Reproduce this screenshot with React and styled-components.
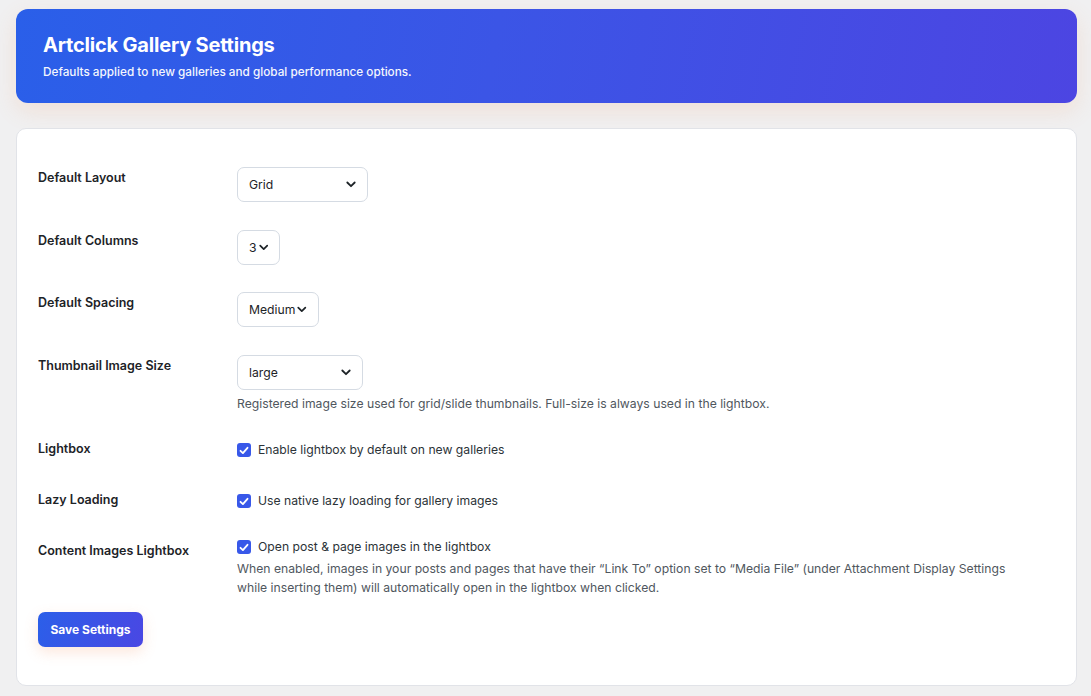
import React from "react";
import styled, { createGlobalStyle } from "styled-components";

const GlobalStyle = createGlobalStyle`
    html, body {
        margin: 0;
        padding: 0;
        background: #f0f0f1;
        font-family: Inter, "Noto Sans", "Liberation Sans", sans-serif;
        color: #1d2327;
    }
`;

const Page = styled.div`
    padding: 9px 14px 10px 16px;
    display: flex;
    flex-direction: column;
    gap: 25px;
`;

const Hero = styled.header`
    height: 94px;
    box-sizing: border-box;
    padding: 24px 27px 0;
    border-radius: 12px;
    background: linear-gradient(100deg, #2a5fe9 0%, #3b55e6 45%, #4c45e2 100%);
    box-shadow: 0 8px 22px rgba(240, 140, 90, 0.16);
    color: #fff;
`;

const HeroTitle = styled.h1`
    margin: 0;
    font-size: 20px;
    font-weight: 700;
    line-height: 24px;
    letter-spacing: -0.2px;
`;

const HeroText = styled.p`
    margin: 8px 0 0;
    font-size: 11.75px;
    line-height: 15px;
    font-weight: 500;
    opacity: 0.95;
`;

const Card = styled.section`
    background: #fff;
    border: 1px solid #e1e3e8;
    border-radius: 10px;
    padding: 24px 21px 38px;
`;

const Row = styled.div`
    display: grid;
    grid-template-columns: 199px 1fr;
    padding-top: ${p => p.$top ?? 14}px;
    padding-bottom: ${p => p.$bottom ?? 13.5}px;
`;

const Label = styled.div`
    font-size: 12.5px;
    font-weight: 600;
    line-height: 18px;
    color: #1d2327;
    padding-top: ${p => p.$offset ?? 2}px;
`;

const Field = styled.div`
    display: flex;
    flex-direction: column;
    align-items: flex-start;
    padding-right: 10px;
`;

const SelectBox = styled.div`
    height: 35px;
    box-sizing: border-box;
    width: ${p => p.$width}px;
    display: flex;
    align-items: center;
    justify-content: ${p => (p.$tight ? "flex-start" : "space-between")};
    gap: 2px;
    padding: 0 11px 0 11px;
    border: 1px solid #d5dbe3;
    border-radius: 7px;
    font-size: 12.2px;
    color: #1d2327;
    background: #fff;
`;

const Hint = styled.p`
    margin: ${p => p.$gap ?? 4}px 0 0;
    max-width: 790px;
    font-size: 12.2px;
    line-height: 19px;
    color: #50575e;
`;

const CheckLine = styled.label`
    display: flex;
    align-items: center;
    gap: 7px;
    font-size: 12.2px;
    line-height: 20px;
    color: #2c3338;
`;

const Box = styled.span`
    width: 14px;
    height: 14px;
    border-radius: 3px;
    background: #3858e9;
    display: inline-flex;
    align-items: center;
    justify-content: center;
`;

const SaveButton = styled.button`
    margin-top: 15px;
    width: 105px;
    height: 35px;
    border: 0;
    border-radius: 7px;
    background: linear-gradient(110deg, #2b5fe9 0%, #4a47e3 100%);
    color: #fff;
    font-family: inherit;
    font-size: 12px;
    font-weight: 700;
    box-shadow: 0 5px 14px rgba(240, 140, 90, 0.22);
`;

function Chevron() {
    return (
        <svg width="10" height="7" viewBox="0 0 10 7" fill="none">
            <path d="M1.3 1.5 5 5.2 8.7 1.5" stroke="#1d2327" strokeWidth="1.8" strokeLinecap="round" strokeLinejoin="round" />
        </svg>
    );
}

function Select({ value, width, tight }) {
    return (
        <SelectBox $width={width} $tight={tight}>
            <span>{value}</span>
            <Chevron />
        </SelectBox>
    );
}

function Checkbox({ children }) {
    return (
        <CheckLine>
            <Box>
                <svg width="10" height="9" viewBox="0 0 10 9" fill="none">
                    <path d="M1.5 4.8 3.9 7.1 8.5 1.8" stroke="#fff" strokeWidth="1.8" strokeLinecap="round" strokeLinejoin="round" />
                </svg>
            </Box>
            {children}
        </CheckLine>
    );
}

export default function App() {
    return (
        <>
            <GlobalStyle />
            <Page>
                <Hero>
                    <HeroTitle>Artclick Gallery Settings</HeroTitle>
                    <HeroText>Defaults applied to new galleries and global performance options.</HeroText>
                </Hero>
                <Card>
                    <Row>
                        <Label>Default Layout</Label>
                        <Field><Select value="Grid" width={131} /></Field>
                    </Row>
                    <Row>
                        <Label>Default Columns</Label>
                        <Field><Select value="3" width={43} tight /></Field>
                    </Row>
                    <Row>
                        <Label>Default Spacing</Label>
                        <Field><Select value="Medium" width={82} tight /></Field>
                    </Row>
                    <Row>
                        <Label>Thumbnail Image Size</Label>
                        <Field>
                            <Select value="large" width={126} />
                            <Hint>Registered image size used for grid/slide thumbnails. Full-size is always used in the lightbox.</Hint>
                        </Field>
                    </Row>
                    <Row $top={14} $bottom={17}>
                        <Label $offset={0}>Lightbox</Label>
                        <Field><Checkbox>Enable lightbox by default on new galleries</Checkbox></Field>
                    </Row>
                    <Row $top={14} $bottom={12}>
                        <Label $offset={0}>Lazy Loading</Label>
                        <Field><Checkbox>Use native lazy loading for gallery images</Checkbox></Field>
                    </Row>
                    <Row $top={14} $bottom={0}>
                        <Label $offset={5}>Content Images Lightbox</Label>
                        <Field>
                            <Checkbox>Open post &amp; page images in the lightbox</Checkbox>
                            <Hint $gap={1.5}>
                                When enabled, images in your posts and pages that have their “Link To” option set to “Media File” (under Attachment Display Settings while inserting them) will automatically open in the lightbox when clicked.
                            </Hint>
                        </Field>
                    </Row>
                    <SaveButton>Save Settings</SaveButton>
                </Card>
            </Page>
        </>
    );
}
